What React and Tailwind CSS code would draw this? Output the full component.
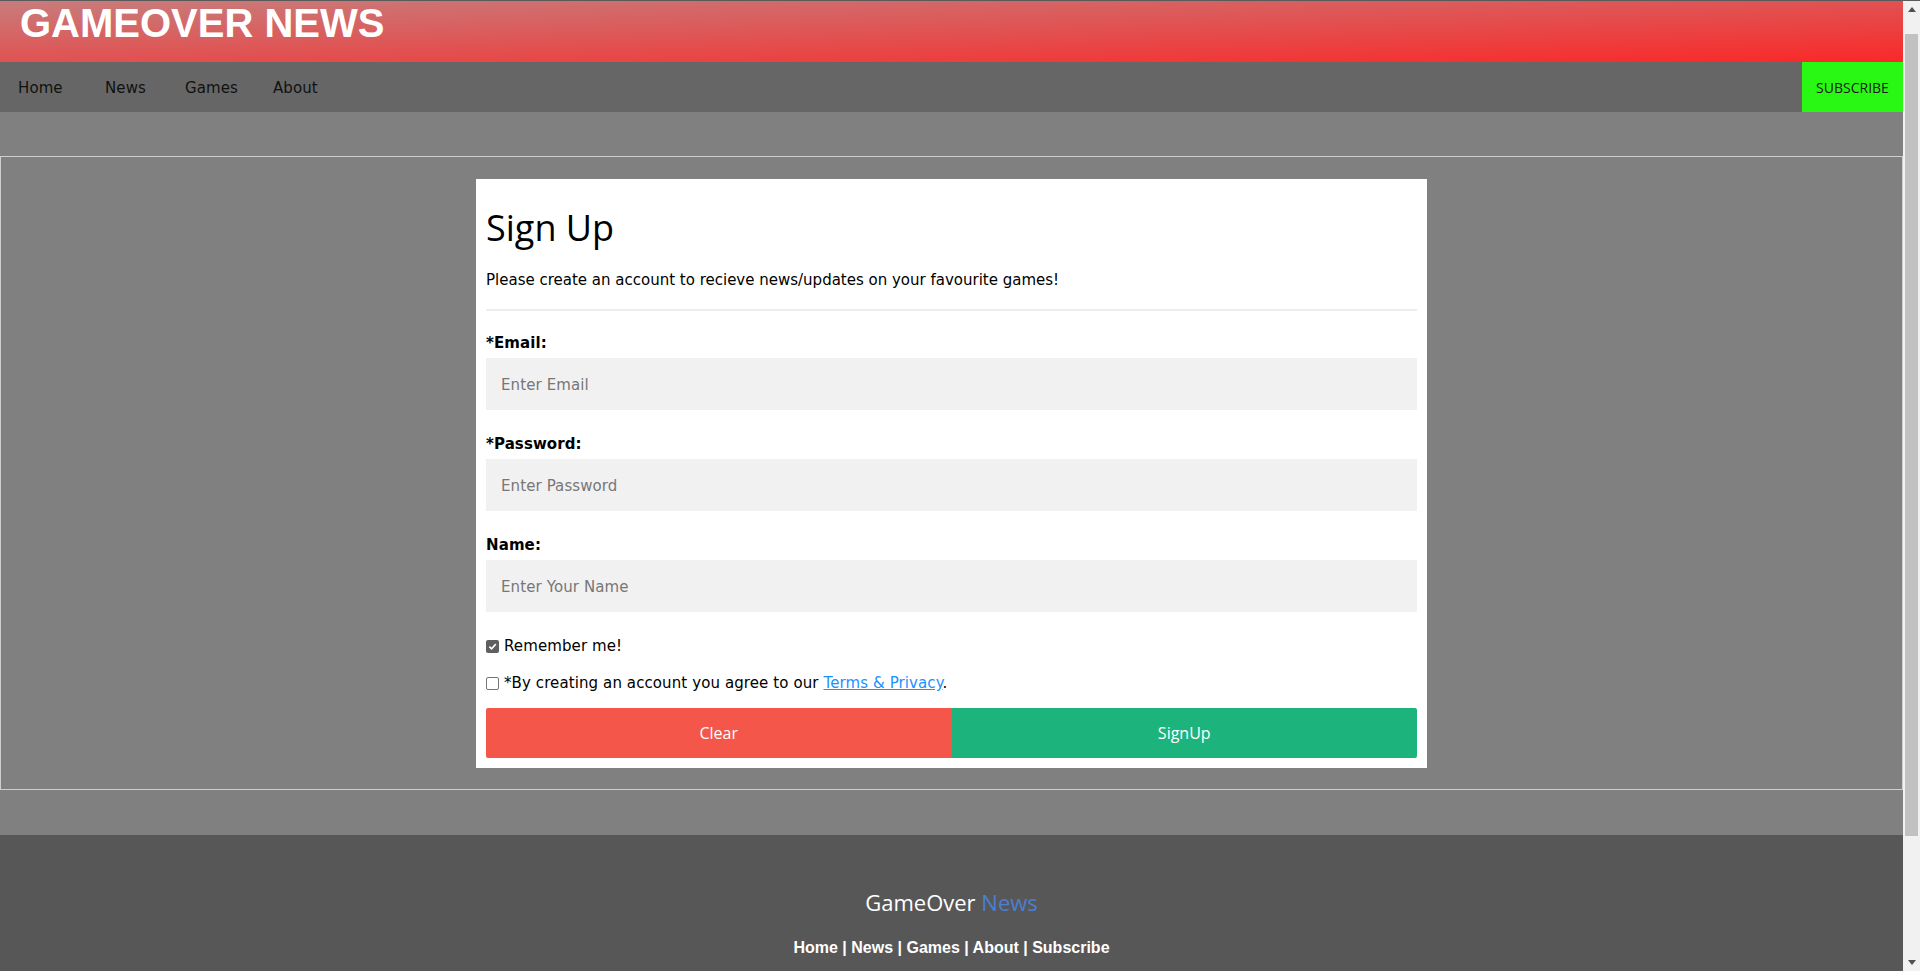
const verdana = "font-['DejaVu_Sans',Verdana,sans-serif]"
const segoe = "font-['Open_Sans',sans-serif]"

function Field({ label, placeholder, type = 'text', first }) {
  return (
    <>
      <label className={`block ${first ? 'mt-[24px]' : 'mt-[26px]'} text-[15px] leading-[17px] font-bold text-black`}>
        {label}
      </label>
      <input
        type={type}
        placeholder={placeholder}
        className={`mt-[6px] block w-full h-[52px] bg-[#f1f1f1] pl-[15px] pt-[2px] text-[15px] ${verdana} outline-none placeholder:text-[#777]`}
      />
    </>
  )
}

function Checkbox({ checked }) {
  if (checked) {
    return (
      <span className="w-[13px] h-[13px] rounded-[2px] bg-[#5f5f5f] flex items-center justify-center shrink-0">
        <svg width="9" height="9" viewBox="0 0 10 10">
          <path d="M1.5 5.2 L4 7.6 L8.6 2.4" fill="none" stroke="#fff" strokeWidth="1.8" />
        </svg>
      </span>
    )
  }
  return <span className="w-[13px] h-[13px] rounded-[2px] border border-[#767676] bg-white shrink-0" />
}

function Scrollbar() {
  return (
    <div className="w-[17px] bg-[#f1f1f1] flex flex-col shrink-0">
      <div className="h-[17px] flex items-center justify-center">
        <svg width="8" height="5" viewBox="0 0 8 5">
          <path d="M0 5 L4 0 L8 5 Z" fill="#505050" />
        </svg>
      </div>
      <div className="mx-[2px] mt-[16px] h-[802px] bg-[#c1c1c1]" />
      <div className="flex-1" />
      <div className="h-[17px] flex items-center justify-center">
        <svg width="8" height="5" viewBox="0 0 8 5">
          <path d="M0 0 L8 0 L4 5 Z" fill="#505050" />
        </svg>
      </div>
    </div>
  )
}

export default function App() {
  const links = [
    { name: 'Home', w: 'w-[87px]' },
    { name: 'News', w: 'w-[80px]' },
    { name: 'Games', w: 'w-[88px]' },
    { name: 'About', w: 'w-[60px]' },
  ]

  return (
    <div className={`h-[971px] overflow-hidden flex flex-col border-t border-[#5a5a5a] ${verdana}`}>
      <div className="flex flex-1 min-h-0">
        <div className="flex-1 flex flex-col min-w-0">
          <header className="h-[61px] bg-[linear-gradient(to_bottom_right,#c87c7c,#fa2828)] pl-[20px] pt-[2px]">
            <h1 className="font-['Liberation_Sans',Arial,sans-serif] text-[40px] leading-[40px] font-bold text-white">
              GAMEOVER NEWS
            </h1>
          </header>

          <nav className="h-[50px] bg-[#666666] flex items-center justify-between">
            <div className="flex items-center pl-[18px] pt-[2px] text-[15px] text-[#111] tracking-[0.1px]">
              {links.map((l) => (
                <a key={l.name} href="#" className={l.w}>
                  {l.name}
                </a>
              ))}
            </div>
            <a
              href="#"
              className={`h-full w-[101px] bg-[#29f814] flex items-center justify-center text-[14px] text-[#1a1a1a] ${segoe}`}
            >
              SUBSCRIBE
            </a>
          </nav>

          <main className="bg-[#808080] pt-[44px] pb-[45px]">
            <div className="border border-[#cfcfcf] pt-[22px] pb-[21px]">
              <form className="w-[951px] mx-auto bg-white pt-[29px] px-[10px] pb-[10px] tracking-[0.1px]">
                <h1 className={`${segoe} text-[36px] leading-[40px] text-black tracking-normal`}>Sign Up</h1>
                <p className="mt-[23px] text-[15px] leading-[18px] text-black tracking-normal">
                  Please create an account to recieve news/updates on your favourite games!
                </p>
                <div className="mt-[20px] h-[2px] bg-[#ededed]" />

                <Field label="*Email:" placeholder="Enter Email" first />
                <Field label="*Password:" placeholder="Enter Password" type="password" />
                <Field label="Name:" placeholder="Enter Your Name" />

                <div className="mt-[26px] h-[17px] flex items-center gap-[5px] text-[15px] text-black">
                  <Checkbox checked />
                  <span>Remember me!</span>
                </div>
                <div className="mt-[20px] h-[17px] flex items-center gap-[5px] text-[15px] text-black">
                  <Checkbox />
                  <span>
                    *By creating an account you agree to our{' '}
                    <a href="#" className="text-[#1e90ff] underline">
                      Terms &amp; Privacy
                    </a>
                    .
                  </span>
                </div>

                <div className={`mt-[16px] h-[50px] flex ${segoe} text-[16px] text-white tracking-normal`}>
                  <button type="button" className="flex-1 bg-[#f5564a] rounded-l-[2px]">
                    Clear
                  </button>
                  <button type="button" className="flex-1 bg-[#1db37c] rounded-r-[2px]">
                    SignUp
                  </button>
                </div>
              </form>
            </div>
          </main>

          <footer className="flex-1 bg-[#575757] text-center pt-[52px]">
            <p className={`${segoe} text-[22px] leading-[30px] text-white`}>
              GameOver <span className="text-[#4a7fd4]">News</span>
            </p>
            <p className="mt-[22px] font-['Liberation_Sans',Arial,sans-serif] text-[16px] leading-[18px] font-bold text-white">
              Home | News | Games | About | Subscribe
            </p>
          </footer>
        </div>
        <Scrollbar />
      </div>
    </div>
  )
}
